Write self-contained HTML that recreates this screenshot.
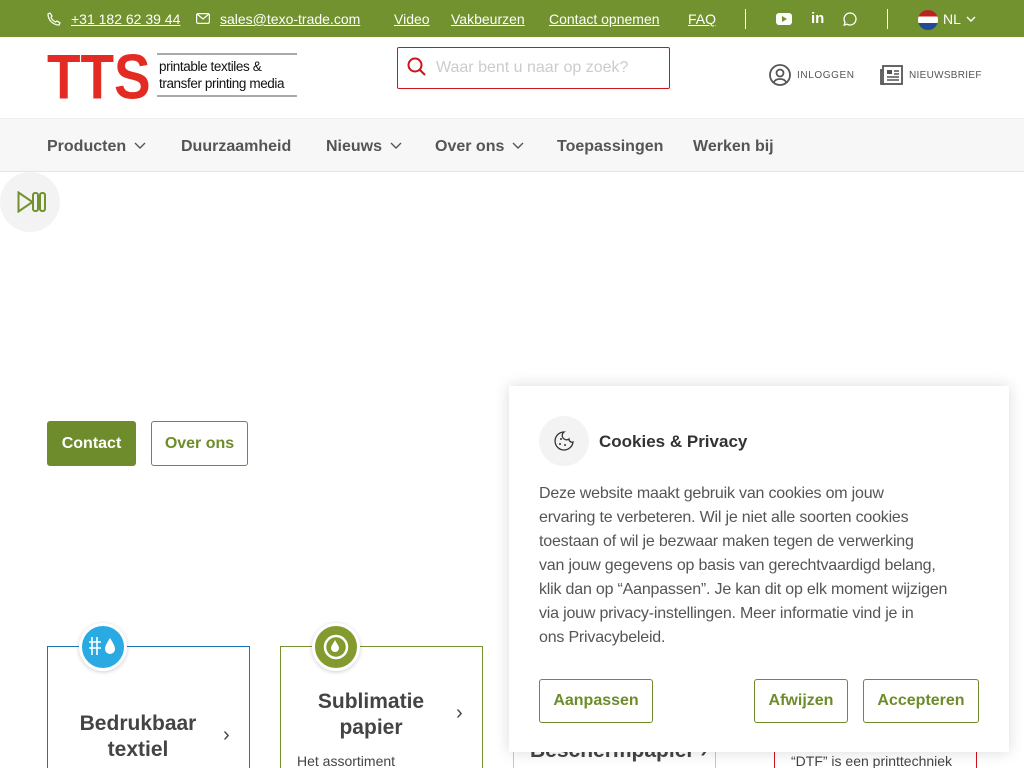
<!DOCTYPE html>
<html><head><meta charset="utf-8"><style>
*{margin:0;padding:0;box-sizing:border-box}
html,body{width:1024px;height:768px;overflow:hidden}
body{font-family:"Liberation Sans",sans-serif;background:#fff;position:relative;color:#444}
.top{position:absolute;left:0;top:0;width:1024px;height:37px;background:#72912f;color:#fff;font-size:14px}
.top a{position:absolute;top:11px;color:#fff;text-decoration:underline}
.a{position:absolute}
.nav{position:absolute;left:0;top:118px;width:1024px;height:54px;background:#f7f7f7;border-top:1px solid #eee;border-bottom:1px solid #e5e5e5}
.nav span{position:absolute;top:19px;font-size:16px;font-weight:bold;color:#555;white-space:nowrap}
.nav svg{margin-left:8px;vertical-align:2px}
.btn{position:absolute;border:1px solid #6e8c2b;border-radius:3px;color:#6e8c2b;font-weight:bold;font-size:16px;display:flex;align-items:center;justify-content:center}
.card{position:absolute;top:646px;width:203px;height:140px;border:1px solid;background:#fff}
.ic{position:absolute;width:48px;height:48px;border-radius:50%;border:3px solid #fff;box-shadow:0 1px 4px rgba(0,0,0,.2)}
</style></head><body>
<div class="top">
<svg class="a" style="left:47px;top:12px" width="14" height="14" viewBox="0 0 14 14"><path d="M3 1l2 3-1 1.5c1 2 2.5 3.5 4.5 4.5L10 9l3 2-1 2C6 13 1 8 1 2z" fill="none" stroke="#fff" stroke-width="1.2"/></svg>
<a style="left:71px">+31 182 62 39 44</a>
<svg class="a" style="left:196px;top:13px" width="14" height="11"><rect x=".6" y=".6" width="12.8" height="9.8" rx="1.5" fill="none" stroke="#fff" stroke-width="1.2"/><path d="M1 1l6 5 6-5" fill="none" stroke="#fff" stroke-width="1.2"/></svg>
<a style="left:220px">sales@texo-trade.com</a>
<a style="left:394px">Video</a><a style="left:451px">Vakbeurzen</a><a style="left:549px">Contact opnemen</a><a style="left:688px">FAQ</a>
<div class="a" style="left:745px;top:9px;width:1px;height:20px;background:#fff"></div>
<svg class="a" style="left:776px;top:13px" width="16" height="12"><rect width="16" height="12" rx="3" fill="#fff"/><path d="M6 3l5 3-5 3z" fill="#72912f"/></svg>
<span class="a" style="left:811px;top:10px;font-weight:bold;font-size:15px">in</span>
<svg class="a" style="left:843px;top:12px" width="14" height="14"><path d="M7 1a6 6 0 1 1-3 11.2L1.2 13l.8-2.8A6 6 0 0 1 7 1z" fill="none" stroke="#fff" stroke-width="1.3"/></svg>
<div class="a" style="left:887px;top:9px;width:1px;height:20px;background:#fff"></div>
<div class="a" style="left:918px;top:10px;width:20px;height:20px;border-radius:50%;background:linear-gradient(#b22 0 33%,#fff 33% 66%,#224a9a 66%)"></div>
<span class="a" style="left:943px;top:11px">NL</span>
<svg class="a" style="left:966px;top:16px" width="10" height="6"><path d="M1 1l4 4 4-4" fill="none" stroke="#fff" stroke-width="1.4"/></svg>
</div>
<div class="a" style="left:47px;top:49px;font-size:56px;font-weight:bold;color:#e32b23;line-height:50px;transform:scale(.98,1.12);transform-origin:0 0">TTS</div>
<div class="a" style="left:157px;top:53px;width:140px;height:44px;border-top:2px solid #aaa;border-bottom:2px solid #aaa;font-size:13.5px;color:#111;line-height:17px;padding:3px 0 0 2px;white-space:nowrap;letter-spacing:-.4px">printable textiles &amp;<br>transfer printing media</div>
<div class="a" style="left:397px;top:47px;width:273px;height:42px;border:1px solid #d0121b;border-radius:2px"></div>
<svg class="a" style="left:407px;top:57px" width="20" height="20"><circle cx="8" cy="8" r="6.5" fill="none" stroke="#d0121b" stroke-width="2"/><path d="M13 13l5 5" stroke="#d0121b" stroke-width="2"/></svg>
<span class="a" style="left:436px;top:59px;font-size:16px;color:#ccc">Waar bent u naar op zoek?</span>
<svg class="a" style="left:769px;top:64px" width="22" height="22"><circle cx="11" cy="11" r="10" fill="none" stroke="#555" stroke-width="1.8"/><circle cx="11" cy="9" r="3.5" fill="none" stroke="#555" stroke-width="1.8"/><path d="M5 18c2-4 10-4 12 0" fill="none" stroke="#555" stroke-width="1.8"/></svg>
<span class="a" style="left:797px;top:70px;font-size:10px;letter-spacing:.6px;color:#555">INLOGGEN</span>
<svg class="a" style="left:880px;top:65px" width="23" height="20"><rect x="3" y="1" width="19" height="18" fill="none" stroke="#555" stroke-width="1.8"/><path d="M3 5H1v14h3" fill="none" stroke="#555" stroke-width="1.8"/><rect x="7" y="5" width="5" height="4" fill="#555"/><path d="M14 6h5M14 9h5M7 12h12M7 15h12" stroke="#555" stroke-width="1.5"/></svg>
<span class="a" style="left:909px;top:70px;font-size:10px;letter-spacing:.3px;color:#555">NIEUWSBRIEF</span>
<div class="nav">
<span style="left:47px">Producten<svg width="12" height="7"><path d="M1 1l5 5 5-5" fill="none" stroke="#555" stroke-width="1.4"/></svg></span>
<span style="left:181px">Duurzaamheid</span>
<span style="left:326px">Nieuws<svg width="12" height="7"><path d="M1 1l5 5 5-5" fill="none" stroke="#555" stroke-width="1.4"/></svg></span>
<span style="left:435px">Over ons<svg width="12" height="7"><path d="M1 1l5 5 5-5" fill="none" stroke="#555" stroke-width="1.4"/></svg></span>
<span style="left:557px">Toepassingen</span><span style="left:693px">Werken bij</span></div>
<div class="a" style="left:0;top:172px;width:60px;height:60px;border-radius:50%;background:#f3f3f3"></div>
<svg class="a" style="left:17px;top:191px" width="30" height="22"><path d="M1.5 1.5v19l14-9.5z" fill="none" stroke="#72912f" stroke-width="2"/><rect x="16" y="2" width="5" height="18" rx="2" fill="none" stroke="#72912f" stroke-width="2"/><rect x="23" y="2" width="5" height="18" rx="2" fill="none" stroke="#72912f" stroke-width="2"/></svg>
<div class="btn" style="left:47px;top:421px;width:89px;height:45px;background:#6e8c2b;color:#fff">Contact</div>
<div class="btn" style="left:151px;top:421px;width:97px;height:45px">Over ons</div>
<div class="card" style="left:47px;border-color:#1a75b8"><div style="position:absolute;left:25px;top:64px;width:130px;text-align:center;font-size:21px;font-weight:bold;line-height:26px">Bedrukbaar textiel</div><span style="position:absolute;left:175px;top:77px;font-size:20px">›</span></div>
<div class="ic" style="left:79px;top:623px;background:#29aae2"><svg style="position:absolute;left:6px;top:9px" width="32" height="24"><path d="M4 2v18M9 2v18M1 7h12M1 13h12" stroke="#fff" stroke-width="1.6"/><path d="M22 3c-3 5-5 8-5 11a5 5 0 0 0 10 0c0-3-2-6-5-11z" fill="#fff"/></svg></div>
<div class="card" style="left:280px;border-color:#72912f"><div style="position:absolute;left:25px;top:42px;width:130px;text-align:center;font-size:21px;font-weight:bold;line-height:26px">Sublimatie papier</div><span style="position:absolute;left:175px;top:55px;font-size:20px">›</span><span style="position:absolute;left:16px;top:106px;font-size:14px">Het assortiment</span></div>
<div class="ic" style="left:312px;top:623px;background:#829a2e"><svg style="position:absolute;left:6px;top:6px" width="30" height="30"><circle cx="15" cy="15" r="11" fill="none" stroke="#fff" stroke-width="2.5"/><path d="M14 8c-2 4-4 6-4 8a4 4 0 0 0 8 0c0-2-2-4-4-8z" fill="#fff"/></svg></div>
<div class="card" style="left:513px;border-color:#d4d36b"><span style="position:absolute;left:16px;top:92px;font-size:21px;font-weight:bold">Beschermpapier ›</span></div>
<div class="card" style="left:774px;border-color:#d0121b"><span style="position:absolute;left:16px;top:106px;font-size:14px">“DTF” is een printtechniek</span></div>
<div class="a" style="left:509px;top:386px;width:500px;height:366px;background:#fff;box-shadow:0 0 14px rgba(0,0,0,.15)">
<div class="a" style="left:30px;top:30px;width:50px;height:50px;border-radius:50%;background:#f3f3f3"></div>
<svg class="a" style="left:45px;top:45px" width="20" height="20"><path d="M10 1a9 9 0 1 0 9 10 3 3 0 0 1-4-3 3 3 0 0 1-5-7z" fill="none" stroke="#333" stroke-width="1.3"/><circle cx="7" cy="8" r="1" fill="#333"/><circle cx="6" cy="13" r="1" fill="#333"/><circle cx="11" cy="14" r="1" fill="#333"/></svg>
<span class="a" style="left:90px;top:46px;font-size:17px;font-weight:bold;color:#333">Cookies &amp; Privacy</span>
<p class="a" style="left:30px;top:96px;width:460px;font-size:16px;line-height:24px;color:#555;white-space:nowrap;letter-spacing:-.2px">Deze website maakt gebruik van cookies om jouw<br>ervaring te verbeteren. Wil je niet alle soorten cookies<br>toestaan of wil je bezwaar maken tegen de verwerking<br>van jouw gegevens op basis van gerechtvaardigd belang,<br>klik dan op “Aanpassen”. Je kan dit op elk moment wijzigen<br>via jouw privacy-instellingen. Meer informatie vind je in<br>ons Privacybeleid.</p>
<div class="btn" style="left:30px;top:293px;width:114px;height:44px">Aanpassen</div>
<div class="btn" style="left:245px;top:293px;width:94px;height:44px">Afwijzen</div>
<div class="btn" style="left:354px;top:293px;width:116px;height:44px">Accepteren</div>
</div>
</body></html>
